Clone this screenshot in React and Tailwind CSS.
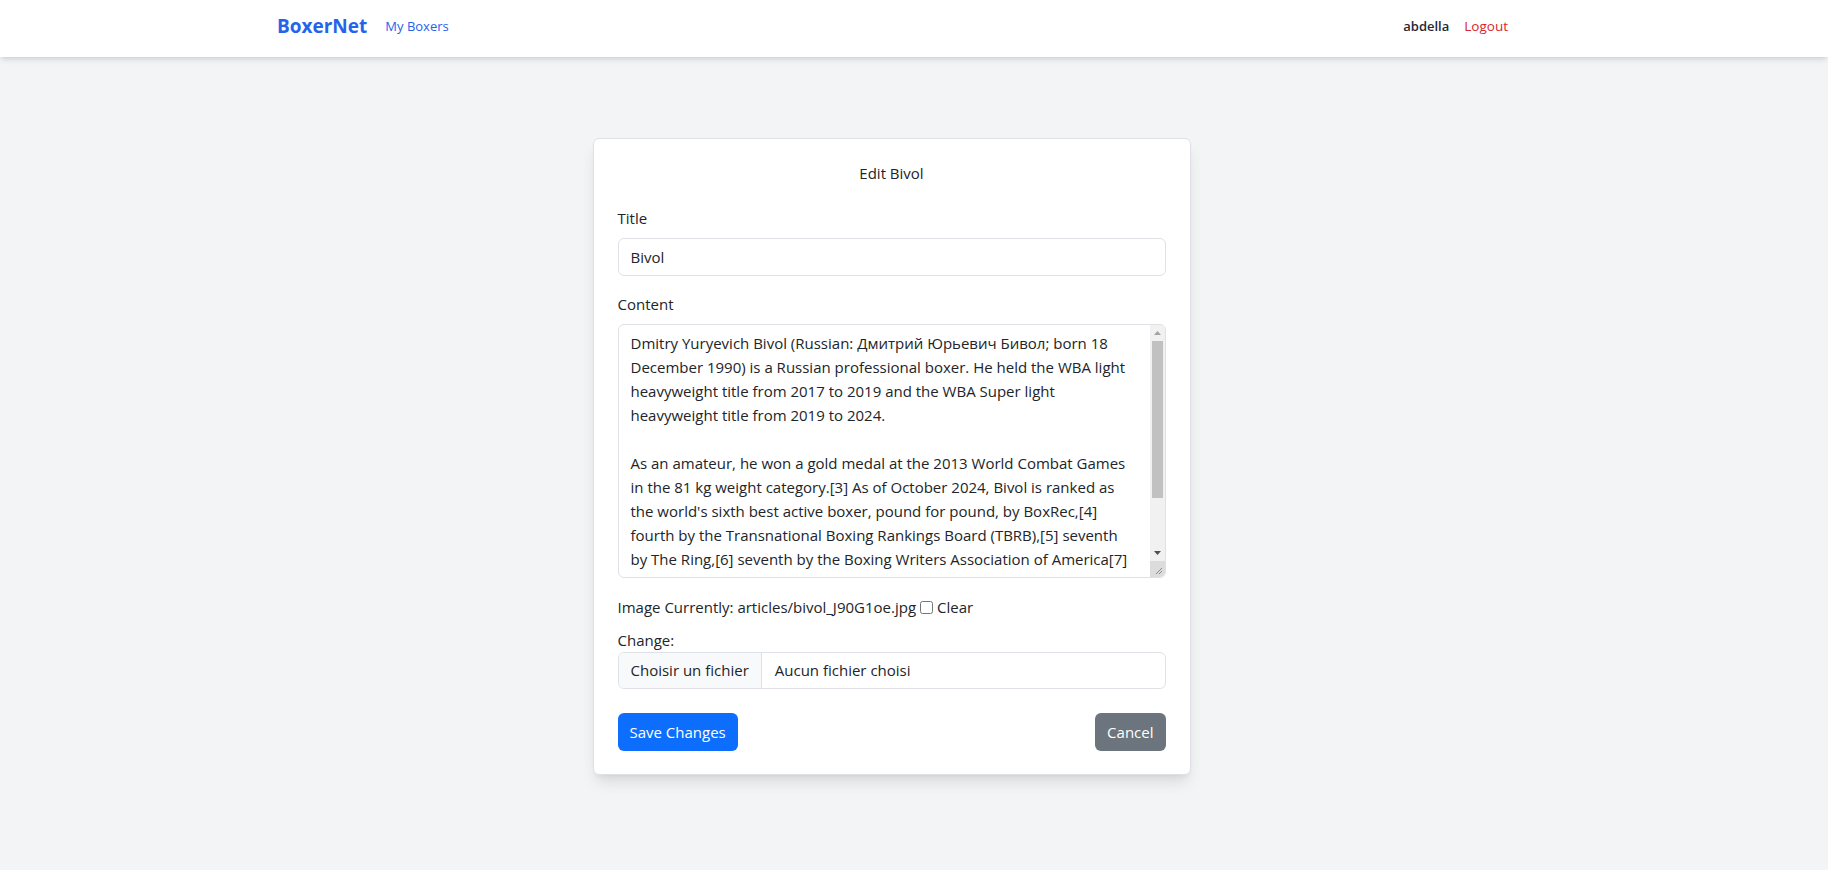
import { useState } from "react";

const CONTENT = [
    "Dmitry Yuryevich Bivol (Russian: Дмитрий Юрьевич Бивол; born 18",
    "December 1990) is a Russian professional boxer. He held the WBA light",
    "heavyweight title from 2017 to 2019 and the WBA Super light",
    "heavyweight title from 2019 to 2024.",
    "",
    "As an amateur, he won a gold medal at the 2013 World Combat Games",
    "in the 81 kg weight category.[3] As of October 2024, Bivol is ranked as",
    "the world's sixth best active boxer, pound for pound, by BoxRec,[4]",
    "fourth by the Transnational Boxing Rankings Board (TBRB),[5] seventh",
    "by The Ring,[6] seventh by the Boxing Writers Association of America[7]",
    "and eighth by ESPN.[8]",
    "",
    "Bivol is known for his technical style and footwork.",
].join("\n");

function Navbar() {
    return (
        <nav className="bg-white shadow-md h-[57px] relative z-10">
            <div className="max-w-[1280px] mx-auto h-full flex items-center justify-between pl-[3px] pr-[46px] pb-1">
                <div className="flex items-center">
                    <a href="#" className="text-[19px] font-bold text-[#2563eb] leading-none">BoxerNet</a>
                    <a href="#" className="ml-[18px] text-[13px] text-[#2563eb]">My Boxers</a>
                </div>
                <div className="flex items-center">
                    <span className="text-[13px] font-semibold text-[#1f2937]">abdella</span>
                    <a href="#" className="ml-[15px] text-[13.5px] text-[#dc2626]">Logout</a>
                </div>
            </div>
        </nav>
    );
}

// Classic scrollbar drawn over the textarea's right edge
function Scrollbar() {
    return (
        <div className="absolute top-px right-px bottom-px w-[15px] flex flex-col bg-[#f1f1f1] rounded-r-[5px] overflow-hidden">
            <div className="h-[16px] flex items-center justify-center">
                <svg width="7" height="4" viewBox="0 0 7 4"><path d="M0 4 L3.5 0 L7 4 Z" fill="#a3a3a3" /></svg>
            </div>
            <div className="h-[157px] mx-[2px] bg-[#c1c1c1]" />
            <div className="flex-1" />
            <div className="h-[16px] flex items-center justify-center">
                <svg width="7" height="4" viewBox="0 0 7 4"><path d="M0 0 L3.5 4 L7 0 Z" fill="#505050" /></svg>
            </div>
            <div className="h-[16px] bg-[#dcdcdc] relative">
                <svg className="absolute right-[2px] bottom-[2px]" width="9" height="9" viewBox="0 0 9 9">
                    <path d="M8 2 L2 8 M8 5 L5 8" stroke="#8a8a8a" strokeWidth="1" />
                </svg>
            </div>
        </div>
    );
}

export default function App() {
    const [title, setTitle] = useState("Bivol");
    const [content, setContent] = useState(CONTENT);
    const [clear, setClear] = useState(false);

    return (
        <div
            className="min-h-screen bg-[#f3f4f6] text-[#212529]"
            style={{ fontFamily: '"Segoe UI", "Open Sans", sans-serif' }}
        >
            <Navbar />

            {/* Edit form card */}
            <div className="pt-[81px] pr-[45px]">
                <div className="w-[598px] mx-auto bg-white border border-[#dee2e6] rounded-md shadow-lg px-6 pt-[22px] pb-[23px]">
                    <div className="text-center text-[15px] leading-6">Edit Bivol</div>

                    <div className="mt-[21px]">
                        <label className="block text-[15px] leading-6 mb-2">Title</label>
                        <input
                            value={title}
                            onChange={(e) => setTitle(e.target.value)}
                            className="w-full h-[38px] px-3 border border-[#dee2e6] rounded-md text-[15px] outline-none"
                        />
                    </div>

                    <div className="mt-4">
                        <label className="block text-[15px] leading-6 mb-2">Content</label>
                        <div className="relative">
                            <textarea
                                value={content}
                                onChange={(e) => setContent(e.target.value)}
                                className="block w-full h-[254px] pl-3 pr-[28px] py-[6px] border border-[#dee2e6] rounded-md text-[15px] leading-6 outline-none overflow-hidden resize-none"
                            />
                            <Scrollbar />
                        </div>
                    </div>

                    <div className="mt-[17px] text-[15px] leading-6 flex items-center">
                        <span>Image Currently: articles/bivol_J90G1oe.jpg</span>
                        <input
                            type="checkbox"
                            checked={clear}
                            onChange={(e) => setClear(e.target.checked)}
                            className="ml-[4px] w-[13px] h-[13px]"
                        />
                        <span className="ml-[4px]">Clear</span>
                    </div>

                    <div className="mt-[9px] text-[15px] leading-6">Change:</div>
                    <div className="flex h-[37px] border border-[#dee2e6] rounded-md overflow-hidden text-[15px]">
                        <span className="flex items-center px-3 bg-[#f8f9fa] border-r border-[#dee2e6]">Choisir un fichier</span>
                        <span className="flex items-center pl-[13px]">Aucun fichier choisi</span>
                    </div>

                    <div className="mt-6 flex items-center justify-between">
                        <button className="h-[38px] px-3 rounded-md bg-[#0d6efd] text-white text-[15px]">Save Changes</button>
                        <button className="h-[38px] px-3 rounded-md bg-[#6c757d] text-white text-[15px]">Cancel</button>
                    </div>
                </div>
            </div>
        </div>
    );
}
